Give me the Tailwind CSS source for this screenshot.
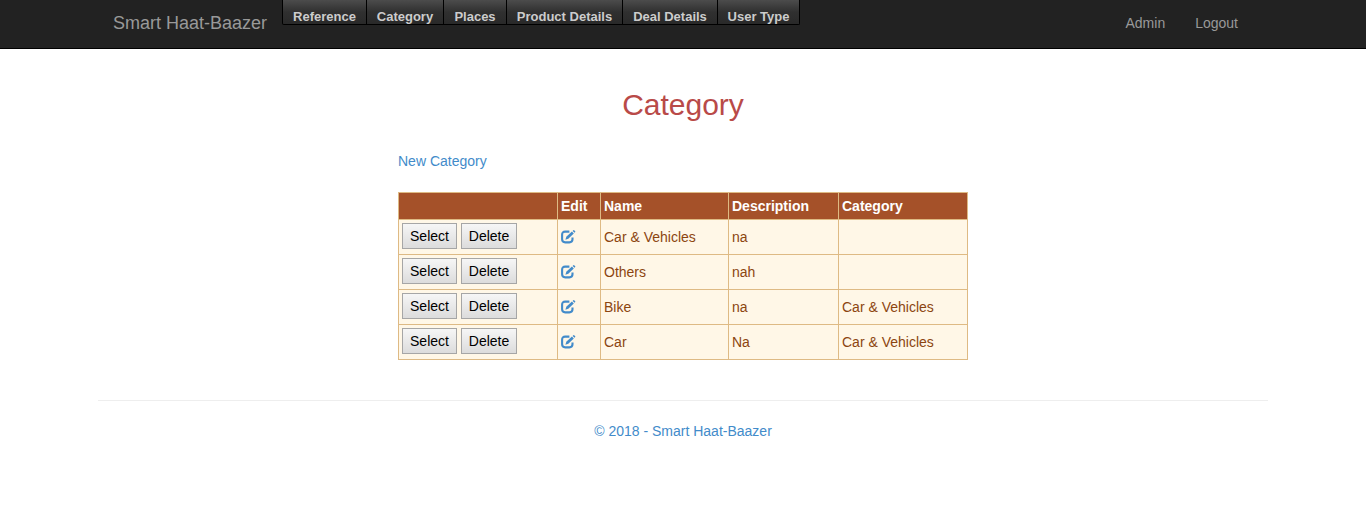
<!DOCTYPE html>
<html lang="en">
<head>
<meta charset="utf-8">
<title>Category - Smart Haat-Baazer</title>
<script src="https://cdn.jsdelivr.net/npm/@tailwindcss/browser@4"></script>
</head>
<body class="bg-white font-['Liberation_Sans',Arial,sans-serif] text-[14px] leading-5 text-[#333]">
<svg class="hidden">
  <symbol id="edit" viewBox="0 0 15 14">
    <path d="M8.4 1.6H4.2Q1.1 1.6 1.1 4.7V9.3Q1.1 12.4 4.2 12.4H8.4Q11.5 12.4 11.5 9.3V7.6" fill="none" stroke="#428bca" stroke-width="2.1"/>
    <path d="M4.4 9.7L5.3 6.8L10.9 1.5L12.8 3.4L7.3 8.8Z" fill="#428bca"/>
    <path d="M11.6 .9L12.4 .2Q12.8 0 13.2 .3L14.2 1.2Q14.5 1.6 14.2 2L13.5 2.7Z" fill="#428bca"/>
  </symbol>
</svg>
<nav class="h-[49px] bg-[#222] border-b border-black">
  <div class="mx-[98px] flex items-start">
    <a class="w-[184px] pl-[15px] pt-[13px] text-[18px] text-[#999] whitespace-nowrap">Smart Haat-Baazer</a>
    <ul class="flex h-[25px] rounded-b-[2px] border-x border-b border-black bg-linear-to-b from-[#4c4c4c] via-[#303030] via-50% to-[#292929] text-[13px] font-bold text-[#ccc] leading-[33px] text-center whitespace-nowrap">
      <li class="w-[84px] border-r border-black">Reference</li>
      <li class="w-[77px] border-r border-black">Category</li>
      <li class="w-[63px] border-r border-black">Places</li>
      <li class="w-[116px] border-r border-black">Product Details</li>
      <li class="w-[95px] border-r border-black">Deal Details</li>
      <li class="w-[81px]">User Type</li>
    </ul>
    <div class="ml-auto flex gap-[30px] pr-[30px] pt-[13px] text-[#999]"><a>Admin</a><a>Logout</a></div>
  </div>
</nav>
<main class="mx-[98px]">
  <h1 class="pt-[39px] text-center text-[30px] leading-[33px] text-[#b94a48]">Category</h1>
  <div class="mx-auto w-[570px] pt-[30px]">
    <a class="block text-[#428bca]">New Category</a>
    <table class="mt-[21px] w-[570px] table-fixed border-collapse bg-[#fff7e7] text-[#8c4510]">
      <colgroup><col class="w-[159px]"><col class="w-[43px]"><col class="w-[128px]"><col class="w-[110px]"><col class="w-[129px]"></colgroup>
      <thead>
        <tr class="h-[27px] bg-[#a55129] text-left text-white [&>th]:border [&>th]:border-[#deba84] [&>th]:px-[3px] [&>th]:py-0"><th></th><th>Edit</th><th>Name</th><th>Description</th><th>Category</th></tr>
      </thead>
      <tbody id="rows" class="[&_td]:border [&_td]:border-[#deba84] [&_td]:px-[3px] [&_td]:py-0"></tbody>
    </table>
  </div>
  <hr class="mt-[40px] border-[#eee]">
  <footer class="pt-[20px] text-center text-[#428bca]">© 2018 - Smart Haat-Baazer</footer>
</main>
<script>
const rows = [['Car & Vehicles','na',''],['Others','nah',''],['Bike','na','Car & Vehicles'],['Car','Na','Car & Vehicles']];
const btn = 'h-[26px] border border-[#a6a6a6] bg-linear-to-b from-[#f6f6f6] to-[#dcdcdc] text-black text-center leading-[24px]';
document.getElementById('rows').innerHTML = rows.map(r => `<tr class="h-[35px]">
<td><div class="flex gap-[4px] -mt-[2px]"><button class="w-[55px] ${btn}">Select</button><button class="w-[56px] ${btn}">Delete</button></div></td>
<td><svg class="block w-[15px] h-[14px] -mt-[1px]"><use href="#edit"/></svg></td>
${r.map(t => `<td>${t.replace('&','&amp;')}</td>`).join('')}</tr>`).join('');
</script>
</body>
</html>
